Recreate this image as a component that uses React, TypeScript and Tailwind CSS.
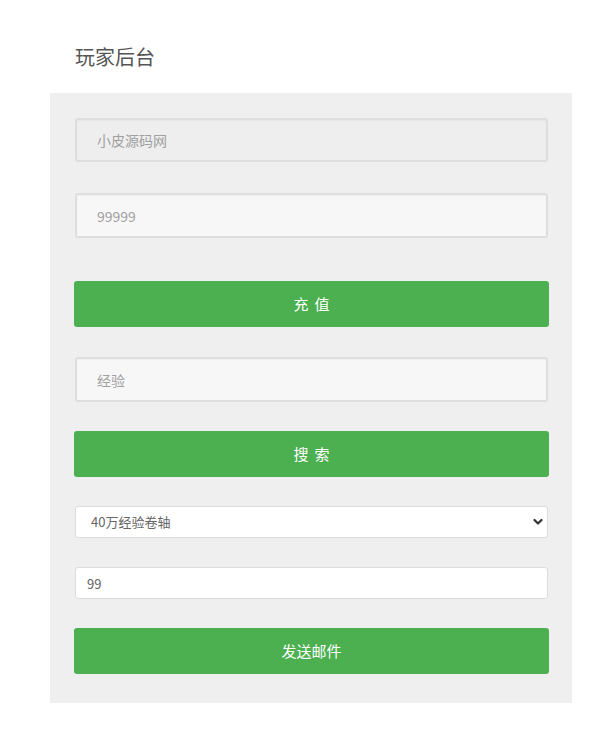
import React from "react";

const font = { fontFamily: '"Noto Sans CJK SC", "Noto Sans", sans-serif' };

function Field({ placeholder, disabled }: { placeholder: string; disabled?: boolean }) {
  return (
    <input
      type="text"
      placeholder={placeholder}
      disabled={disabled}
      className={`block w-full rounded-[3px] border-2 border-[#dedede] px-[20px] text-[14px] text-[#555] placeholder:text-[#a0a0a0] outline-none shadow-[inset_0_1px_2px_rgba(0,0,0,0.04)] ${
        disabled ? "h-[44px] bg-[#eeeeee]" : "h-[45px] bg-[#f7f7f7]"
      }`}
      style={font}
    />
  );
}

function GreenButton({ label, spaced }: { label: string; spaced?: boolean }) {
  return (
    <button
      type="button"
      className={`block w-[calc(100%+2px)] -ml-[1px] h-[46px] rounded-[3px] bg-[#4caf50] text-white text-[15px] ${
        spaced ? "tracking-[6px] pl-[6px]" : ""
      }`}
      style={font}
    >
      {label}
    </button>
  );
}

export default function App() {
  return (
    <div className="min-h-[738px] bg-white pt-[42px]" style={font}>
      <h1 className="ml-[75px] text-[20px] leading-[30px] text-[#555] font-normal">玩家后台</h1>
      <div className="ml-[50px] mt-[21px] w-[522px] bg-[#efefef] pt-[25px] pb-[29px] pl-[25px] pr-[24px]">
        <Field placeholder="小皮源码网" disabled />
        <div className="mt-[31px]">
          <Field placeholder="99999" />
        </div>
        <div className="mt-[43px]">
          <GreenButton label="充值" spaced />
        </div>
        <div className="mt-[30px]">
          <Field placeholder="经验" />
        </div>
        <div className="mt-[29px]">
          <GreenButton label="搜索" spaced />
        </div>
        <div className="relative mt-[29px]">
          <select
            className="block w-full h-[32px] appearance-none rounded-[3px] border border-[#dcdcdc] bg-white pl-[15px] pr-[30px] text-[13px] text-[#666] outline-none"
            style={font}
            defaultValue="40万经验卷轴"
          >
            <option>40万经验卷轴</option>
          </select>
          <svg
            className="pointer-events-none absolute right-[5px] top-[12px]"
            width="10"
            height="8"
            viewBox="0 0 10 8"
            fill="none"
          >
            <path d="M1.5 2l3.5 3.5L8.5 2" stroke="#333" strokeWidth="2.2" strokeLinecap="round" strokeLinejoin="round" />
          </svg>
        </div>
        <input
          type="text"
          defaultValue="99"
          className="mt-[29px] block w-full h-[32px] rounded-[3px] border border-[#dcdcdc] bg-white px-[11px] text-[13px] text-[#666] outline-none"
          style={font}
        />
        <div className="mt-[29px]">
          <GreenButton label="发送邮件" />
        </div>
      </div>
    </div>
  );
}
